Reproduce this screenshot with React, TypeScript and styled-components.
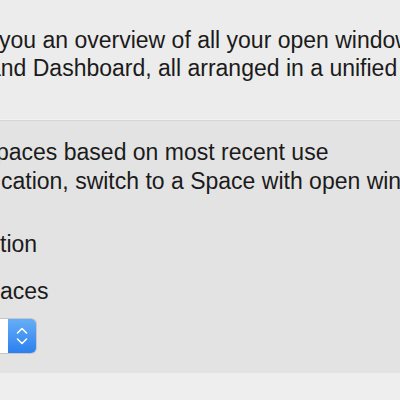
import React from "react";
import styled, { createGlobalStyle } from "styled-components";

const Global = createGlobalStyle`
  html, body { margin: 0; padding: 0; }
  body {
    width: 400px;
    height: 400px;
    overflow: hidden;
    background: #ededed;
    font-family: "Liberation Sans", Arial, sans-serif;
    color: #1b1b1b;
    -webkit-font-smoothing: antialiased;
  }
`;

const Window = styled.div`
  width: 400px;
  height: 400px;
  display: flex;
  flex-direction: column;
  overflow: hidden;
  background: #ededed;
`;

const Intro = styled.div`
  height: 120px;
  box-sizing: border-box;
  padding-top: 26px;
  display: flex;
  flex-direction: column;
  background: #ececec;
  border-bottom: 1px solid #f3f3f3;
`;

const Line = styled.div<{ $shift: number }>`
  font-size: 23px;
  line-height: 28px;
  white-space: nowrap;
  margin-left: ${(p) => p.$shift}px;
`;

const Group = styled.div`
  box-sizing: border-box;
  height: 253px;
  border-top: 1px solid #d5d5d5;
  background: #e3e3e3;
  padding-top: 17px;
  display: flex;
  flex-direction: column;
`;

const Row = styled.div<{ $shift: number; $top: number }>`
  font-size: 23px;
  line-height: 28px;
  white-space: nowrap;
  margin-top: ${(p) => p.$top}px;
  margin-left: ${(p) => p.$shift}px;
`;

const Popup = styled.div`
  margin-top: 14px;
  margin-left: -52px;
  width: 88px;
  height: 34px;
  display: flex;
  border-radius: 5px;
  box-shadow: 0 0 0 1px #c6c6c6;
  overflow: hidden;
`;

const PopupValue = styled.div`
  flex: 1;
  background: #ffffff;
`;

const Stepper = styled.div`
  width: 28px;
  display: flex;
  align-items: center;
  justify-content: center;
  background: linear-gradient(#67aef7, #2b80f0);
`;

const Footer = styled.div`
  flex: 1;
  background: #eeeeee;
`;

export default function App() {
  return (
    <>
      <Global />
      <Window>
        <Intro>
          <Line $shift={-1}>you an overview of all your open windows,</Line>
          <Line $shift={-12}>and Dashboard, all arranged in a unified view.</Line>
        </Intro>
        <Group>
          <Row $top={0} $shift={-4}>paces based on most recent use</Row>
          <Row $top={1} $shift={1}>cation, switch to a Space with open windows</Row>
          <Row $top={35} $shift={0}>tion</Row>
          <Row $top={19} $shift={0}>aces</Row>
          <Popup>
            <PopupValue />
            <Stepper>
              <svg width="12" height="18" viewBox="0 0 12 18" fill="none">
                <path d="M1.5 6 L6 1.5 L10.5 6" stroke="#fff" strokeWidth="1.6" strokeLinecap="round" strokeLinejoin="round" />
                <path d="M1.5 12 L6 16.5 L10.5 12" stroke="#fff" strokeWidth="1.6" strokeLinecap="round" strokeLinejoin="round" />
              </svg>
            </Stepper>
          </Popup>
        </Group>
        <Footer />
      </Window>
    </>
  );
}
